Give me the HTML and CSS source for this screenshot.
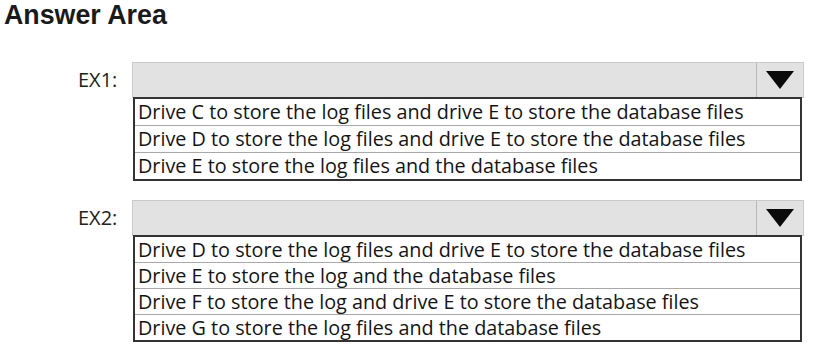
FILE: index.html
```html
<!DOCTYPE html>
<html lang="en">
<head>
    <meta charset="UTF-8">
    <title>Answer Area</title>
    <link rel="stylesheet" href="styles.css">
</head>
<body>
    <h1 class="title">Answer Area</h1>

    <div class="question first">
        <div class="label">EX1:</div>
        <div class="dropdown">
            <div class="select">
                <div class="select-value"></div>
                <div class="select-arrow"><span class="triangle"></span></div>
            </div>
            <ul class="options tall">
                <li>Drive C to store the log files and drive E to store the database files</li>
                <li>Drive D to store the log files and drive E to store the database files</li>
                <li>Drive E to store the log files and the database files</li>
            </ul>
        </div>
    </div>

    <div class="question">
        <div class="label">EX2:</div>
        <div class="dropdown">
            <div class="select">
                <div class="select-value"></div>
                <div class="select-arrow"><span class="triangle"></span></div>
            </div>
            <ul class="options">
                <li>Drive D to store the log files and drive E to store the database files</li>
                <li>Drive E to store the log and the database files</li>
                <li>Drive F to store the log and drive E to store the database files</li>
                <li>Drive G to store the log files and the database files</li>
            </ul>
        </div>
    </div>
</body>
</html>
```

FILE: styles.css
```css
body {
    margin: 0;
    background: #ffffff;
    font-family: 'Open Sans', 'Noto Sans', sans-serif;
    color: #111;
}
.title {
    margin: 0 0 0 4px;
    font-family: 'Liberation Sans', Arial, sans-serif;
    font-size: 26.8px;
    line-height: 30px;
    font-weight: 700;
    color: #1a1a1a;
}
.question {
    display: flex;
    margin-top: 19px;
}
.question.first {
    margin-top: 32px;
}
.label {
    width: 132px;
    box-sizing: border-box;
    padding-left: 78px;
    height: 36px;
    line-height: 36px;
    font-size: 20px;
    color: #222;
}
.dropdown {
    width: 672px;
}
.select {
    display: flex;
    height: 36px;
    box-sizing: border-box;
    border: 1px solid #c9c9c9;
    background: #e2e2e2;
}
.select-value {
    flex: 1;
}
.select-arrow {
    width: 46px;
    border-left: 1px solid #b8b8b8;
    display: flex;
    justify-content: center;
    align-items: center;
}
.triangle {
    width: 0;
    height: 0;
    border-left: 14px solid transparent;
    border-right: 14px solid transparent;
    border-top: 18px solid #0a0a0a;
}
.options {
    list-style: none;
    margin: -1px 2px 0 1px;
    padding: 0;
    border: 2px solid #333;
}
.options li {
    height: 25px;
    line-height: 25px;
    padding-left: 3px;
    font-size: 19.8px;
    color: #141414;
    white-space: nowrap;
    border-bottom: 1px solid #a9a9a9;
}
.options.tall li {
    height: 26px;
    line-height: 26px;
}
.options li:last-child {
    border-bottom: none;
}
```
